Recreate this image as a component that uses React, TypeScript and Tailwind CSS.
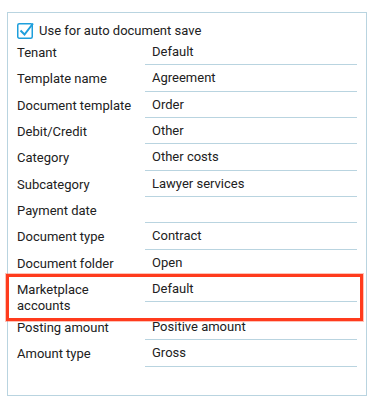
import React from "react";

const rows: { label: string; value: string; highlight?: boolean }[] = [
  { label: "Tenant", value: "Default" },
  { label: "Template name", value: "Agreement" },
  { label: "Document template", value: "Order" },
  { label: "Debit/Credit", value: "Other" },
  { label: "Category", value: "Other costs" },
  { label: "Subcategory", value: "Lawyer services" },
  { label: "Payment date", value: "" },
  { label: "Document type", value: "Contract" },
  { label: "Document folder", value: "Open" },
  { label: "Marketplace accounts", value: "Default", highlight: true },
  { label: "Posting amount", value: "Positive amount" },
  { label: "Amount type", value: "Gross" },
];

export default function App() {
  return (
    <div
      className="w-[373px] h-[402px] bg-white pl-[7px] pt-[12px] text-[13px] text-[#212121]"
      style={{ fontFamily: "Roboto, 'Liberation Sans', sans-serif" }}
    >
      <div className="w-[360px] h-[384px] border border-[#b9d4e0] pl-[9px] pr-[9px] pt-[7px]">
        <div className="flex items-center h-[18px] mt-[1px] leading-[16px]">
          <svg width="18" height="18" viewBox="0 0 18 18" className="-ml-[1px] shrink-0">
            <rect x="1.75" y="2.75" width="14.5" height="14.5" rx="1.5" fill="none" stroke="#1e9fdc" strokeWidth="1.5" />
            <path d="M4.5 9.5 L8.5 13.5 L17 2.5" fill="none" stroke="#1e9fdc" strokeWidth="2" />
          </svg>
          <span className="ml-[5px] mt-[2px]">Use for auto document save</span>
        </div>
        <div className="flex flex-col">
          {rows.map((r) => (
            <div key={r.label} className="relative flex">
              <div className="w-[128px] pt-[6px] leading-[16px] pr-2">{r.label}</div>
              <div className="w-[212px] h-[26.33px] border-b border-[#b9d4e0] pl-[7px] pt-[5px] leading-[16px]">
                {r.value}
              </div>
              {r.highlight && (
                <div className="absolute -left-[11px] -right-[6px] -top-[2px] -bottom-[7px] border-[3px] border-[#ff3b1d] shadow-[0_0_0_1px_rgba(255,80,50,0.35)]" />
              )}
            </div>
          ))}
        </div>
      </div>
    </div>
  );
}
